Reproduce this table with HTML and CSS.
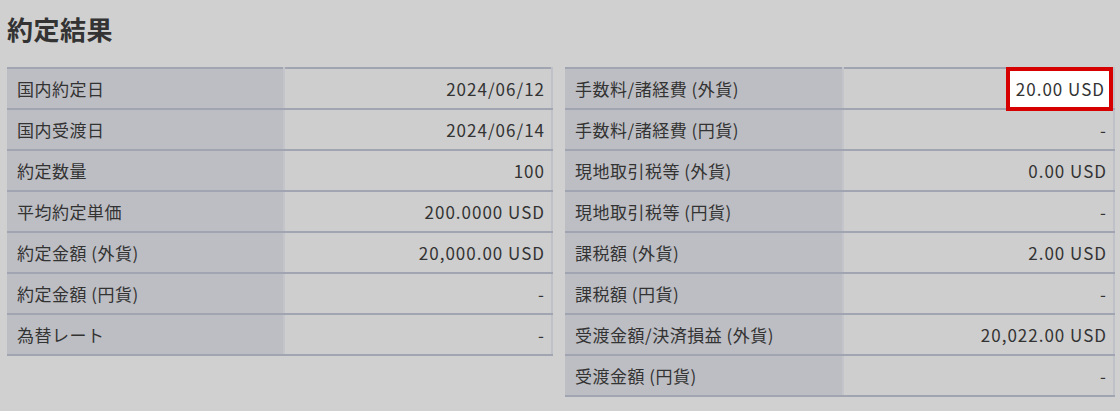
FILE: index.html
```html
<!DOCTYPE html>
<html lang="ja">
<head>
    <meta charset="UTF-8">
    <title>約定結果</title>
    <link rel="stylesheet" href="styles.css">
</head>
<body>
    <h1 class="title">約定結果</h1>
    <div class="tables">
        <table class="result">
            <tr><th>国内約定日</th><td>2024/06/12</td></tr>
            <tr><th>国内受渡日</th><td>2024/06/14</td></tr>
            <tr><th>約定数量</th><td>100</td></tr>
            <tr><th>平均約定単価</th><td>200.0000 USD</td></tr>
            <tr><th>約定金額 (外貨)</th><td>20,000.00 USD</td></tr>
            <tr><th>約定金額 (円貨)</th><td>-</td></tr>
            <tr><th>為替レート</th><td>-</td></tr>
        </table>
        <table class="result right">
            <tr><th>手数料/諸経費 (外貨)</th><td><span class="mark">20.00 USD</span></td></tr>
            <tr><th>手数料/諸経費 (円貨)</th><td>-</td></tr>
            <tr><th>現地取引税等 (外貨)</th><td>0.00 USD</td></tr>
            <tr><th>現地取引税等 (円貨)</th><td>-</td></tr>
            <tr><th>課税額 (外貨)</th><td>2.00 USD</td></tr>
            <tr><th>課税額 (円貨)</th><td>-</td></tr>
            <tr><th>受渡金額/決済損益 (外貨)</th><td>20,022.00 USD</td></tr>
            <tr><th>受渡金額 (円貨)</th><td>-</td></tr>
        </table>
    </div>
</body>
</html>
```

FILE: styles.css
```css
body {
    margin: 0;
    padding: 0 5px 0 7px;
    background-color: #d0d0d0;
    font-family: "Noto Sans CJK JP", "Liberation Sans", sans-serif;
    color: #333;
}

.title {
    font-size: 26px;
    font-weight: bold;
    margin: 0;
    padding: 12px 0 0 0;
    height: 67px;
    box-sizing: border-box;
    line-height: 34px;
    letter-spacing: 0.5px;
}

.tables {
    display: flex;
    align-items: flex-start;
    gap: 12px;
}

/* Result tables */
.result {
    border-collapse: collapse;
    width: 546px;
    font-size: 17px;
    letter-spacing: 0.5px;
}

.result.right {
    width: 550px;
}

.result th,
.result td {
    height: 41px;
    padding: 0 10px;
    border-top: 2px solid #a1a5b1;
    border-bottom: 2px solid #a1a5b1;
    box-sizing: border-box;
    font-weight: normal;
    white-space: nowrap;
}

.result th {
    width: 277px;
    text-align: left;
    background-color: #bdbec3;
    border-right: 2px solid #c4c5ca;
}

.result.right th {
    width: 278px;
}

.result td {
    text-align: right;
    padding-right: 6px;
    background-color: #cecece;
    border-right: 2px solid #bfc1c8;
    letter-spacing: 1px;
}

/* Highlighted value */
.mark {
    position: relative;
    display: inline-block;
    background-color: #fff;
    border: 4px solid #d70000;
    padding: 6px 4px 6px 6px;
    margin: -5px -6px -5px 0;
    line-height: 24px;
}
```
